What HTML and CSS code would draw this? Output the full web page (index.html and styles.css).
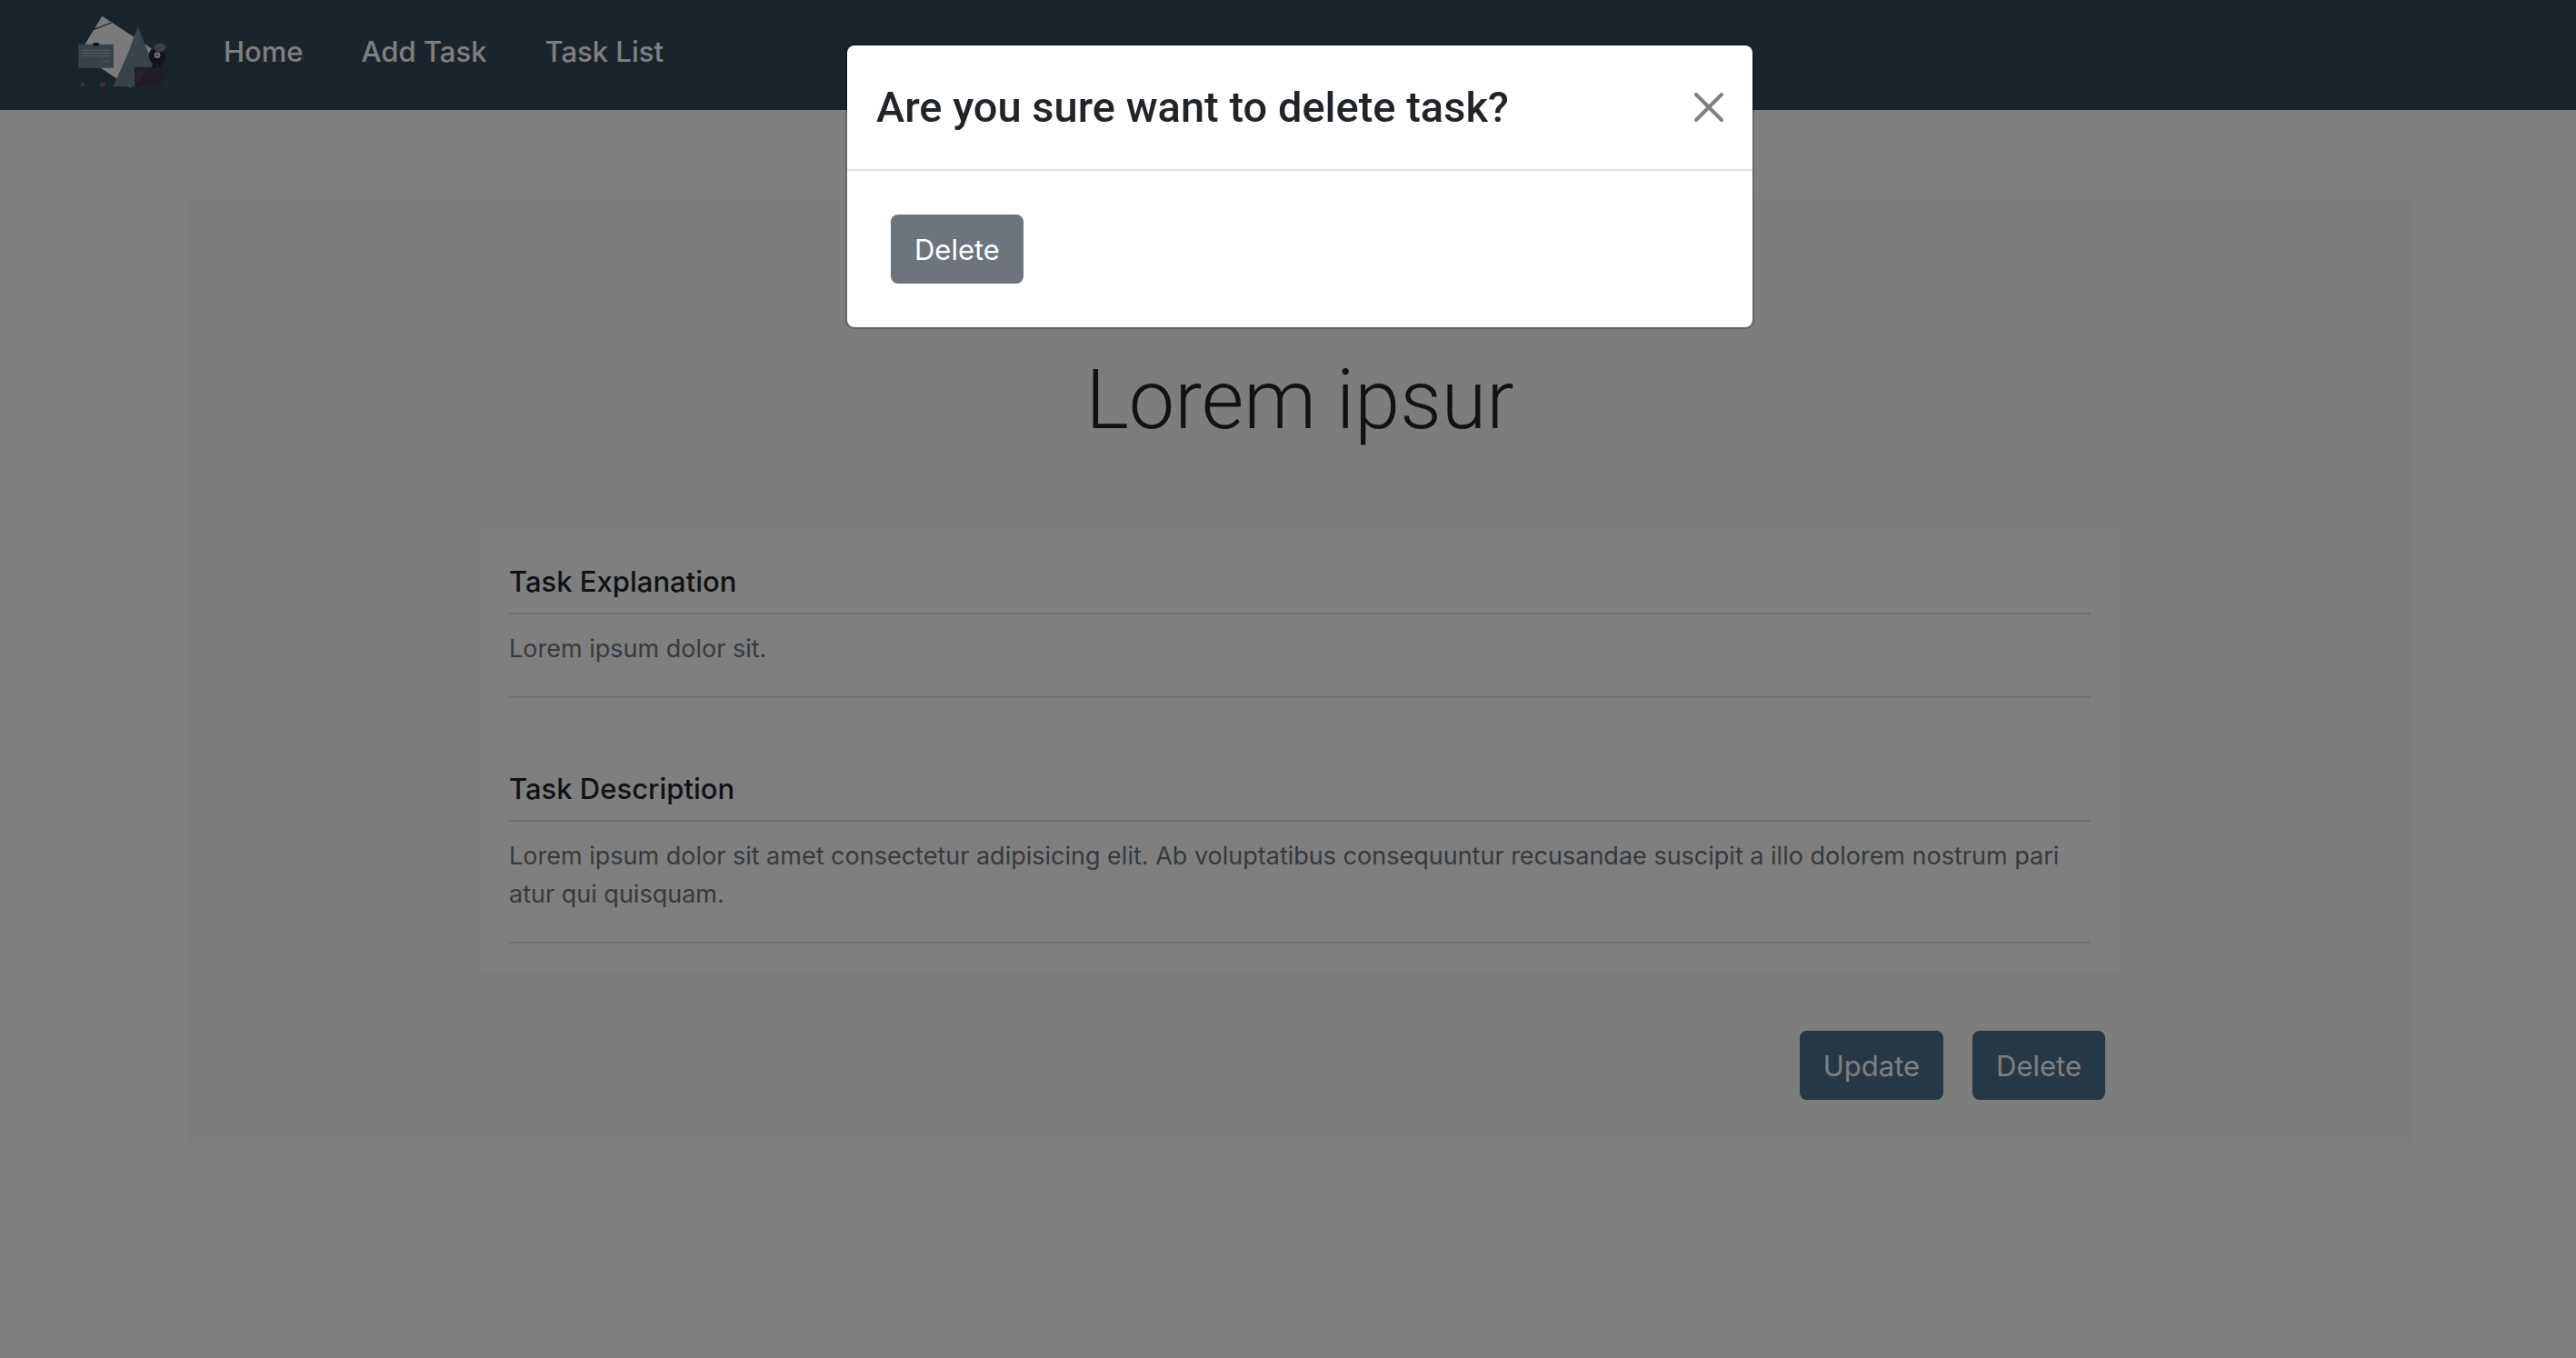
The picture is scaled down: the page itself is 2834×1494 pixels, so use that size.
FILE: index.html
```html
<!DOCTYPE html>
<html lang="en">
<head>
<meta charset="utf-8">
<title>Task Detail</title>
<link rel="stylesheet" href="styles.css">
</head>
<body>
<nav class="navbar">
  <a class="brand" href="#" aria-label="Tasks">
    <svg class="logo" viewBox="72 48 300 240" aria-hidden="true">
      <path fill="#f4f4f4" d="M157 53 320 160 251 289 81 178Z"/>
      <path stroke="#344858" stroke-width="4" d="M128 98 188 75"/>
      <path fill="#6c8498" d="M275 87 329 222H264V285H194L245 170Z"/>
      <path stroke="#9fb0bd" stroke-width="2" fill="none" d="M264 123 281 104M256 142 285 112M250 160 289 121"/>
      <path fill="#6c8498" d="M79 146H195V224H79Z"/>
      <path stroke="#d8dde2" stroke-width="2" d="M92 166H182M92 175H182M92 184H182M158 202H182"/>
      <ellipse cx="137" cy="146" rx="11" ry="6" fill="#262836"/>
      <path fill="#44384e" d="M264 222H356V285H264Z"/>
      <path stroke="#75697f" stroke-width="2" fill="none" d="M264 245 281 225M264 263 291 225M264 279 300 226"/>
      <circle cx="339" cy="187" r="27" fill="#262836"/>
      <path fill="#262836" d="M326 207H337V223H320ZM342 207H352V223H342Z"/>
      <ellipse cx="347" cy="157" rx="19" ry="14" fill="#6c8498"/>
      <circle cx="339" cy="182" r="10" fill="#e4e4e4"/>
      <circle cx="339" cy="182" r="3" fill="none" stroke="#262836" stroke-width="2"/>
      <circle cx="92" cy="279" r="5" fill="#6c8498"/>
      <circle cx="155" cy="279" r="5" fill="#6c8498"/>
      <path fill="#c04a64" d="M155 272H167V284H158Z"/>
    </svg>
  </a>
  <ul class="nav-links">
    <li><a href="#">Home</a></li>
    <li><a href="#">Add Task</a></li>
    <li><a href="#">Task List</a></li>
  </ul>
</nav>
<main class="page">
  <section class="task">
    <h1 class="task-title">Lorem ipsur</h1>
    <div class="card">
      <h2 class="card-heading">Task Explanation</h2>
      <p class="card-text">Lorem ipsum dolor sit.</p>
      <h2 class="card-heading">Task Description</h2>
      <p class="card-text">Lorem ipsum dolor sit amet consectetur adipisicing elit. Ab voluptatibus consequuntur recusandae suscipit a illo dolorem nostrum pari<br>atur qui quisquam.</p>
    </div>
    <div class="actions">
      <button class="btn btn-primary" type="button">Update</button>
      <button class="btn btn-primary" type="button">Delete</button>
    </div>
  </section>
</main>
<div class="backdrop">
  <div class="modal" role="dialog" aria-modal="true" aria-labelledby="modal-title">
    <div class="modal-header">
      <h2 class="modal-title" id="modal-title">Are you sure want to delete task?</h2>
      <button class="close" type="button" aria-label="Close">
        <svg viewBox="0 0 16 16" aria-hidden="true"><path d="M1 1 15 15M15 1 1 15"/></svg>
      </button>
    </div>
    <div class="modal-body">
      <button class="btn btn-secondary" type="button">Delete</button>
    </div>
  </div>
</div>
</body>
</html>
```
FILE: styles.css
```css
* { box-sizing: border-box; }

body {
  margin: 0;
  background: #fff;
  color: #212529;
  font-family: Inter, "Liberation Sans", sans-serif;
  font-size: 31px;
  line-height: 48px;
}

h1, h2, p, ul { margin: 0; padding: 0; }

.navbar {
  display: flex;
  align-items: flex-start;
  gap: 62px;
  padding: 16px 84px 25px;
  background: #344858;
}

.brand, .logo { display: block; }
.logo { width: 100px; height: 80px; }

.nav-links {
  display: flex;
  gap: 64px;
  padding-top: 17px;
  list-style: none;
}

.nav-links a {
  color: #fff;
  font-weight: 500;
  text-decoration: none;
}

.page { padding: 96px 180px 96px 206px; }

.task {
  padding: 166px 322px 48px;
  background: #f8fcfa;
}

.task-title {
  margin-bottom: 90px;
  font-family: Roboto, Inter, sans-serif;
  font-size: 90px;
  font-weight: 300;
  line-height: 115px;
  text-align: center;
}

.card {
  padding: 32px;
  border-radius: 8px 8px 0 0;
  background: #fff;
}

.card-heading {
  padding: 1px 0 15px;
  border-bottom: 2px solid #e0e0e0;
  font-size: 31px;
  font-weight: 500;
  line-height: 38px;
}

.card-text {
  padding: 17px 0 31px;
  border-bottom: 2px solid #e0e0e0;
  color: #6c757d;
  font-size: 27px;
  line-height: 42px;
}

.card-text + .card-heading { margin-top: 80px; }

.actions {
  display: flex;
  justify-content: flex-end;
  gap: 32px;
  padding: 64px 16px 0;
}

.btn {
  padding: 15px 26px 13px;
  border: 0;
  border-radius: 8px;
  color: #fff;
  font: inherit;
}

.btn-primary { background: #4c6e8a; }
.btn-secondary { background: #6c757d; }

.backdrop {
  position: fixed;
  inset: 0;
  padding: 48px 0 48px 26px;
  background: rgba(0, 0, 0, 0.5);
}

.modal {
  max-width: 1000px;
  margin: 0 auto;
  border: 2px solid rgba(0, 0, 0, 0.2);
  border-radius: 10px;
  background: #fff;
  background-clip: padding-box;
}

.modal-header {
  display: flex;
  align-items: center;
  justify-content: space-between;
  padding: 32px;
  border-bottom: 2px solid #dee2e6;
}

.modal-title {
  font-family: Roboto, Inter, sans-serif;
  font-size: 47px;
  font-weight: 500;
  line-height: 72px;
}

.close {
  padding: 0;
  border: 0;
  background: none;
}

.close svg {
  display: block;
  width: 32px;
  height: 32px;
  fill: none;
  stroke: #808080;
  stroke-width: 2;
  stroke-linecap: round;
}

.modal-body { padding: 48px; }
```
